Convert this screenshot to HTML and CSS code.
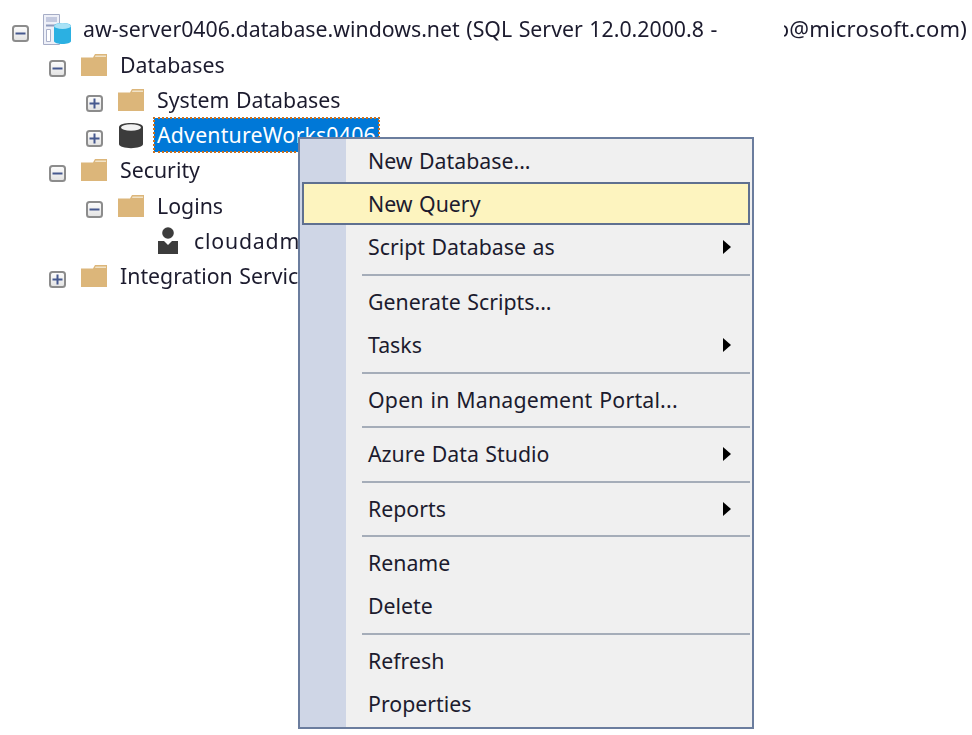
FILE: index.html
```html
<!DOCTYPE html>
<html lang="en">
<head>
  <meta charset="UTF-8">
  <title>Object Explorer</title>
  <link rel="stylesheet" href="styles.css">
</head>
<body>

  <!-- icon shapes, reused by the tree -->
  <svg class="defs" width="0" height="0">
    <defs>
      <linearGradient id="box" x1="0" y1="0" x2="0" y2="1">
        <stop offset="0" stop-color="#fdfdfd"/>
        <stop offset="1" stop-color="#e2e2e2"/>
      </linearGradient>
    </defs>
    <symbol id="folder" viewBox="0 0 26 22">
      <path d="M0 3.500h12L14 0h12v22H0z" fill="#dcb67a"/>
      <path d="M14.500 1.500H25V3H14z" fill="#f1e3c8"/>
    </symbol>
    <symbol id="plus" viewBox="0 0 17 17">
      <rect x="1" y="1" width="15" height="15" rx="2.500" fill="url(#box)" stroke="#8c8c8c" stroke-width="2"/>
      <path d="M3.500 8.500h10M8.500 3.500v10" stroke="#46598f" stroke-width="2"/>
    </symbol>
    <symbol id="minus" viewBox="0 0 17 17">
      <rect x="1" y="1" width="15" height="15" rx="2.500" fill="url(#box)" stroke="#8c8c8c" stroke-width="2"/>
      <path d="M3.500 8.500h10" stroke="#46598f" stroke-width="2"/>
    </symbol>
  </svg>

  <ul class="tree">
    <li class="tree-row level-0">
      <svg class="expander"><use href="#minus"/></svg>
      <svg class="icon" viewBox="0 0 28 31">
        <path d="M.5.500h16v30H.5z" fill="#eef0f8" stroke="#a6adc6"/>
        <path d="M3 3h11v5H3z" fill="#c3c9df"/>
        <path d="M3 10.500h11v2H3z" fill="#8f9abd"/>
        <path d="M3.500 15.500h4v12h-4z" fill="#fff" stroke="#aab1ca"/>
        <path d="M11 12c0-4 17-4 17 0v15c0 4-17 4-17 0z" fill="#2bb0e2"/>
        <ellipse cx="19.500" cy="12" rx="8.500" ry="3" fill="#a9e2f6"/>
      </svg>
      <span class="label">aw-server0406.database.windows.net (SQL Server 12.0.2000.8 -<span class="redacted">o</span><span class="mail">@microsoft.com)</span></span>
    </li>
    <li class="tree-row level-1">
      <svg class="expander"><use href="#minus"/></svg>
      <svg class="icon folder"><use href="#folder"/></svg>
      <span class="label">Databases</span>
    </li>
    <li class="tree-row level-2">
      <svg class="expander"><use href="#plus"/></svg>
      <svg class="icon folder"><use href="#folder"/></svg>
      <span class="label">System Databases</span>
    </li>
    <li class="tree-row level-2">
      <svg class="expander"><use href="#plus"/></svg>
      <svg class="icon" viewBox="0 0 26 27">
        <path d="M1 5c0-5.500 24-5.500 24 0v17c0 5.500-24 5.500-24 0z" fill="#3c3c3c"/>
        <ellipse cx="13" cy="5.500" rx="10" ry="3.200" fill="#f2f2f2"/>
      </svg>
      <span class="label selected">AdventureWorks0406</span>
    </li>
    <li class="tree-row level-1">
      <svg class="expander"><use href="#minus"/></svg>
      <svg class="icon folder"><use href="#folder"/></svg>
      <span class="label">Security</span>
    </li>
    <li class="tree-row level-2">
      <svg class="expander"><use href="#minus"/></svg>
      <svg class="icon folder"><use href="#folder"/></svg>
      <span class="label">Logins</span>
    </li>
    <li class="tree-row level-3">
      <svg class="icon" viewBox="0 0 20 27">
        <circle cx="10" cy="6" r="5.800" fill="#3c3c3c"/>
        <path d="M0 14h6l4 4 4-4h6v13H0z" fill="#3c3c3c"/>
      </svg>
      <span class="label login">cloudadmin</span>
    </li>
    <li class="tree-row level-1">
      <svg class="expander"><use href="#plus"/></svg>
      <svg class="icon folder"><use href="#folder"/></svg>
      <span class="label">Integration Services Catalogs</span>
    </li>
  </ul>

  <!-- Context menu -->
  <div class="menu">
    <div class="menu-item">New Database...</div>
    <div class="menu-item active">New Query</div>
    <div class="menu-item has-sub">Script Database as</div>
    <div class="menu-sep"></div>
    <div class="menu-item">Generate Scripts...</div>
    <div class="menu-item has-sub">Tasks</div>
    <div class="menu-sep"></div>
    <div class="menu-item wide">Open in Management Portal...</div>
    <div class="menu-sep"></div>
    <div class="menu-item has-sub">Azure Data Studio</div>
    <div class="menu-sep"></div>
    <div class="menu-item has-sub">Reports</div>
    <div class="menu-sep"></div>
    <div class="menu-item">Rename</div>
    <div class="menu-item">Delete</div>
    <div class="menu-sep"></div>
    <div class="menu-item">Refresh</div>
    <div class="menu-item">Properties</div>
  </div>

</body>
</html>
```

FILE: styles.css
```css
body {
  margin: 0;
  height: 735px;
  overflow: hidden;
  position: relative;
  background: #fff;
  color: #1c1b2e;
  font-family: "Noto Sans", "Open Sans", sans-serif;
  font-size: 21.3px;
  word-spacing: 1px;
  filter: blur(0.4px);
}

.defs {
  position: absolute;
}

.tree {
  list-style: none;
  margin: 0;
  padding: 12px 0 0;
  white-space: nowrap;
}

.tree-row {
  display: flex;
  align-items: center;
  height: 35.2px;
}

.level-0 { padding-left: 12px; }
.level-1 { padding-left: 49px; }
.level-2 { padding-left: 86px; }
.level-3 { padding-left: 158px; }

.expander {
  width: 17px;
  height: 17px;
  flex: none;
  margin-right: 15px;
  margin-top: 7px;
}

.icon {
  width: 26px;
  height: 27px;
  flex: none;
  margin-right: 13px;
}

.folder {
  height: 22px;
}

.level-0 .expander {
  margin-right: 14px;
}

.level-0 .icon {
  width: 28px;
  height: 31px;
  margin-right: 12px;
}

.level-3 .icon {
  width: 20px;
  margin-right: 16px;
}

.label {
  line-height: 30px;
}

.level-0 .label {
  position: relative;
  top: -1px;
}

.login {
  letter-spacing: 0.8px;
}

.redacted {
  display: inline-block;
  margin-left: 59px;
  clip-path: inset(0 0 0 60%);
}

.mail {
  font-size: 22px;
  letter-spacing: 0.2px;
}

.selected {
  background: #0078d7;
  color: #fff;
  outline: 2px dotted #c9701f;
  outline-offset: -1px;
  padding: 2px 3px;
  margin-left: -3px;
  letter-spacing: 0.2px;
}

/* menu sits over the tree */
.menu {
  position: absolute;
  left: 298px;
  top: 137px;
  width: 448px;
  height: 588px;
  padding: 0 2px;
  background: linear-gradient(to right, #cfd6e6 46px, #f0f0f0 46px);
  border: 2px solid #6b7d9e;
}

.menu-item {
  position: relative;
  height: 43.2px;
  line-height: 43.2px;
  padding-left: 66px;
  box-sizing: border-box;
}

.menu-item.active {
  background: #fdf4bf;
  outline: 2px solid #5f7090;
  outline-offset: -2px;
}

.wide {
  letter-spacing: 0.2px;
}

.has-sub::after {
  content: "";
  position: absolute;
  right: 19px;
  top: 15px;
  border-left: 8px solid #000;
  border-top: 7px solid transparent;
  border-bottom: 7px solid transparent;
}

.menu-sep {
  height: 2px;
  margin: 5.500px 0 3.800px 60px;
  background: #a5adb9;
}
```
